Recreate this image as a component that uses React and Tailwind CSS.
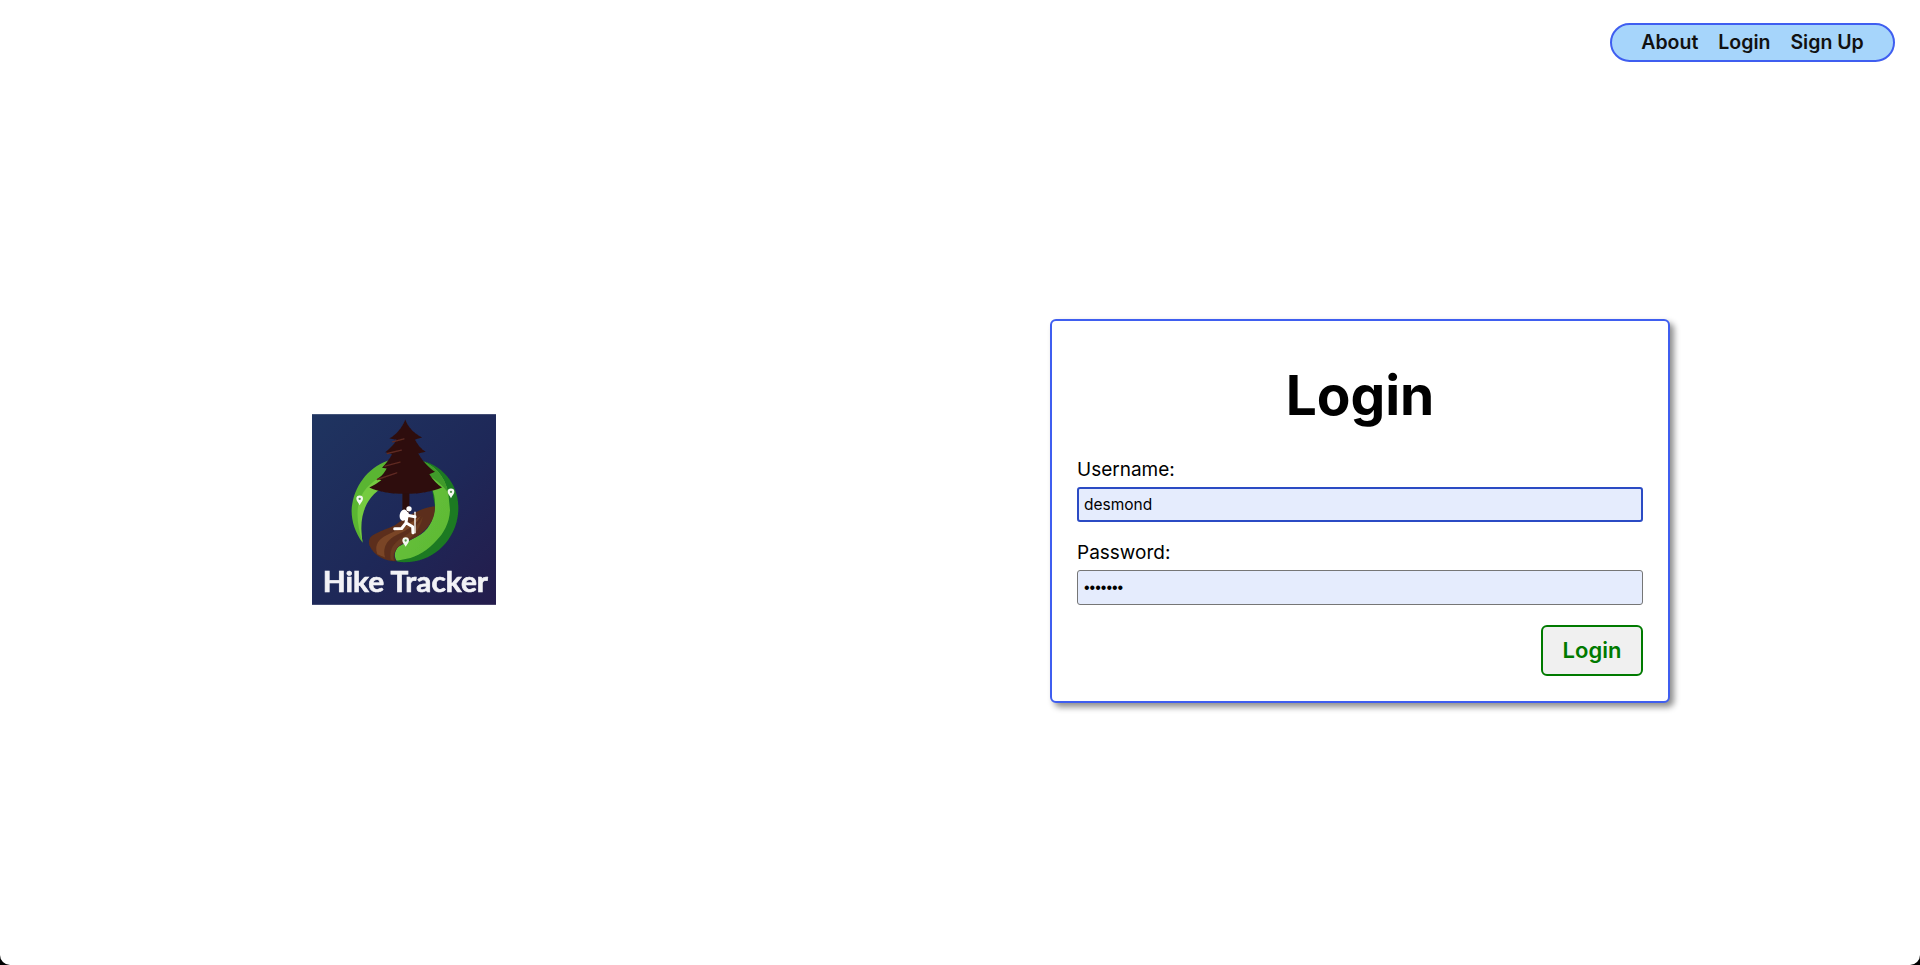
const font = { fontFamily: '"Inter", "Liberation Sans", sans-serif' };

function Pin({ x, y }) {
  return (
    <g>
      <path d={`M${x} ${y + 24}C${x - 4} ${y + 16} ${x - 10} ${y + 12} ${x - 10} ${y + 5}A10 10 0 0 1 ${x + 10} ${y + 5}C${x + 10} ${y + 12} ${x + 4} ${y + 16} ${x} ${y + 24}Z`} fill="#f4f8f0" />
      <circle cx={x} cy={y + 5} r="3.5" fill="#5a9a50" />
    </g>
  );
}

function Logo() {
  return (
    <svg viewBox="36 42 552 572" className="block w-[184px] h-[191px] shrink-0">
      <defs>
        <linearGradient id="bg" x1="0" y1="0" x2="1" y2="1">
          <stop offset="0" stopColor="#1f3460" />
          <stop offset="0.55" stopColor="#1e2858" />
          <stop offset="1" stopColor="#241c4c" />
        </linearGradient>
        <linearGradient id="lg" x1="0" y1="0" x2="1" y2="1">
          <stop offset="0" stopColor="#6cc43c" />
          <stop offset="1" stopColor="#5cb834" />
        </linearGradient>
        <filter id="soft" x="-5%" y="-5%" width="110%" height="110%">
          <feGaussianBlur stdDeviation="1.6" />
        </filter>
      </defs>
      <rect x="36" y="42" width="552" height="572" fill="url(#bg)" />
      <g filter="url(#soft)">
        <path d="M188 428C160 390 150 345 157 310C168 250 210 195 275 178L300 215L250 240C205 262 170 325 188 428Z" fill="#5ab533" />
        <path d="M188 428C172 380 168 335 178 300C192 262 225 235 262 222L250 262C205 285 172 340 188 428Z" fill="#74cb40" />
        <path d="M350 178C425 190 475 250 475 320C477 400 420 470 345 483C325 487 305 487 290 484L340 440L400 370L405 320L395 260Z" fill="#1c7a22" />
        <path d="M350 178C400 190 435 225 445 280L450 330C448 370 430 400 410 420C385 450 350 470 320 476L290 482C282 470 282 455 295 440L350 410C385 395 402 360 405 320C406 295 402 280 395 262L372 218Z" fill="url(#lg)" />
        <path d="M350 178C400 190 435 225 445 280C430 255 400 232 372 218Z" fill="#3f9a2a" />
        <path d="M405 318C405 350 395 378 350 410C330 420 310 428 295 440C282 455 280 470 288 483C255 482 222 468 208 435C204 418 212 408 222 403C245 390 265 385 285 375C320 350 360 322 405 318Z" fill="#5c2f1a" />
        <path d="M232 462C222 435 235 415 270 400C305 385 335 365 362 348C340 385 305 395 280 410C258 425 248 445 255 472Z" fill="#7a4526" />
        <path d="M368 350C350 385 320 405 298 418C280 432 268 448 272 478L282 482C276 458 290 440 310 428C340 412 362 385 368 350Z" fill="#6b3a20" />
        <rect x="307" y="260" width="21" height="85" fill="#2a0d0c" />
        <path d="M316 58C325 85 345 100 366 112L345 118C352 132 362 145 377 155L355 160C368 185 390 205 405 215L388 222C400 240 412 252 426 262C395 275 350 282 316 281C280 282 235 275 208 262C222 255 234 247 244 240L232 236C245 228 252 220 260 205L246 203C258 190 270 175 276 162L256 156C270 145 282 133 290 119L268 115C288 104 305 85 316 58Z" fill="#2e0e0d" />
        <path d="M278 125L312 116M262 160L304 150M255 198L300 186M232 238L290 218" stroke="#5f2a22" strokeWidth="4" fill="none" strokeLinecap="round" />
        <circle cx="327" cy="326" r="8" fill="#fff" />
        <ellipse cx="311" cy="345" rx="12" ry="17" fill="#fff" transform="rotate(15 311 345)" />
        <path d="M322 340L318 368L338 380L339 398M318 368L305 385L284 386M322 345L345 350" stroke="#fff" strokeWidth="9" fill="none" strokeLinecap="round" strokeLinejoin="round" />
        <path d="M345 336L345 398" stroke="#fff" strokeWidth="4" strokeLinecap="round" />
        <Pin x={179} y={291} />
        <Pin x={453} y={270} />
        <Pin x={317} y={416} />
        <text x="68" y="577" fill="#f2f2f6" stroke="#f2f2f6" strokeWidth="2" fontSize="88" fontWeight="700" fontFamily="Lato, 'Open Sans', sans-serif" textLength="496" lengthAdjust="spacingAndGlyphs">Hike Tracker</text>
      </g>
    </svg>
  );
}

export default function App() {
  return (
    <div className="w-full h-[965px] bg-black overflow-hidden" style={font}>
      <div className="h-full bg-white rounded-b-[10px] flex flex-col">
        <div className="flex justify-end pt-[23px] pr-[25px]">
          <nav className="h-[39px] w-[285px] flex items-center justify-center gap-[20px] rounded-[20px] border-2 border-[#3f5ef0] bg-[#a6d5fb] text-[19.5px] font-semibold text-[#111]">
            <a>About</a>
            <a>Login</a>
            <a>Sign Up</a>
          </nav>
        </div>
        <main className="mt-[257px] flex items-center pl-[312px]">
          <div className="mb-[4px]"><Logo /></div>
          <form className="ml-[554px] w-[620px] h-[384px] rounded-[6px] border-2 border-[#3f5ef0] bg-white shadow-[4px_4px_6px_rgba(0,0,0,0.45)] px-[25px] flex flex-col">
            <h1 className="mt-[40px] text-center text-[55px] leading-[68px] font-bold text-black">Login</h1>
            <label className="mt-[30px] text-[19px] leading-[22px] text-black">Username:</label>
            <input readOnly value="desmond" className="mt-[6px] h-[35px] w-full rounded-[3px] border-2 border-[#2b4bc4] bg-[#e5ecfd] px-[5px] text-[15.5px] text-black outline-none" />
            <label className="mt-[20px] text-[19px] leading-[22px] text-black">Password:</label>
            <input readOnly type="password" value="1234567" className="mt-[6px] h-[35px] w-full rounded-[3px] border border-[#767676] bg-[#e5ecfd] px-[6px] font-['Liberation_Sans'] text-[16px] text-black outline-none" />
            <div className="mt-[20px] flex justify-end">
              <button type="button" className="w-[102px] h-[51px] rounded-[6px] border-2 border-[#007a00] bg-[#f0f0f0] text-[22px] font-semibold text-[#007a00]">Login</button>
            </div>
          </form>
        </main>
      </div>
    </div>
  );
}
